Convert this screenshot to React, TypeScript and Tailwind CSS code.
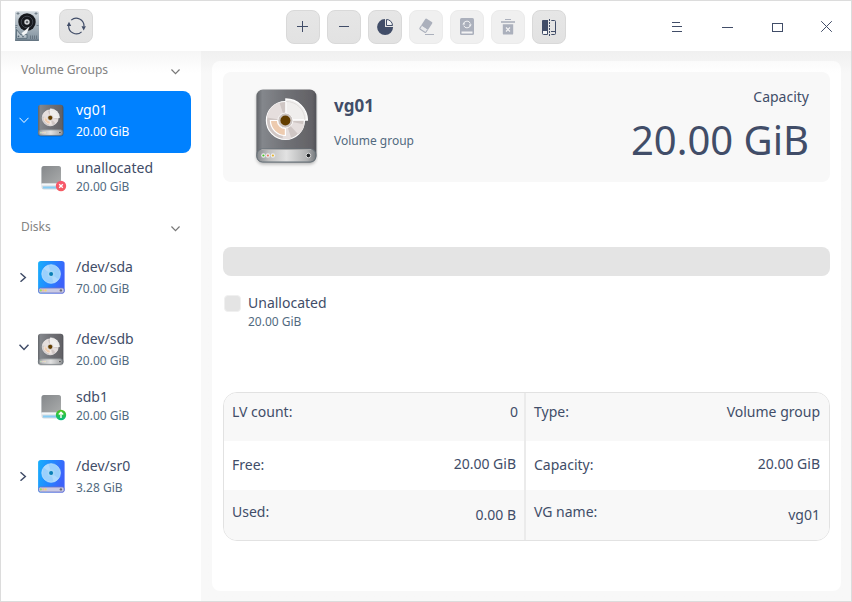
import React from "react";

function AppIcon() {
  return (
    <svg width="26" height="32" viewBox="0 0 26 32" className="shrink-0">
      <defs>
        <linearGradient id="appBody" x1="0" y1="0" x2="0" y2="1">
          <stop offset="0" stopColor="#d3dadf" />
          <stop offset="1" stopColor="#7e8f9c" />
        </linearGradient>
      </defs>
      <rect x="1" y="1.2" width="24" height="29.8" rx="1.6" fill="url(#appBody)" />
      <rect x="1" y="29.6" width="24" height="1.4" rx="0.7" fill="#667683" />
      <path d="M2.5 3.5h3M4 2v3M20.500 3.500h3M22 2v3" stroke="#6f7d88" strokeWidth="0.9" />
      <path d="M1.500 15.500h2M22.500 15.500h2M1.500 17.500h1.500" stroke="#71808c" strokeWidth="1" />
      <path d="M2.500 19.500V28.300H13v-4L7 25z" fill="#b7c2ca" stroke="#526472" strokeWidth="0.8" />
      <circle cx="13" cy="12" r="8.700" fill="#17191d" />
      <circle cx="13" cy="12" r="5.800" fill="none" stroke="#40454d" strokeWidth="1" />
      <circle cx="13" cy="12" r="2.700" fill="#d7dadc" />
      <circle cx="13" cy="12" r="1.300" fill="#65696d" />
      <path d="M15.500 16.500L7.500 23.200l1.700 2.600 3.600-2.600z" fill="#f4f6f7" />
      <circle cx="4.500" cy="26.300" r="0.900" fill="#526472" />
      <circle cx="9" cy="26.600" r="0.800" fill="#526472" />
      <path d="M16.500 25.500v3.500M18.500 25.500v3.500M20.500 25.500v3.500M22.500 25.500v3.500" stroke="#65737f" strokeWidth="0.9" />
    </svg>
  );
}

function RefreshIcon() {
  return (
    <svg width="20" height="20" viewBox="0 0 20 20" fill="none">
      <path d="M5.200 4.100A7.800 7.800 0 0 1 18 10.300" stroke="#414d68" strokeWidth="1.200" />
      <path d="M2.700 9.500A7.800 7.800 0 0 0 15.600 15.900" stroke="#414d68" strokeWidth="1.200" />
      <path d="M0.800 10L3 5.800 5.200 10zM15.500 10.300h4.400l-2.200 4.200z" fill="#414d68" />
    </svg>
  );
}

function PlusIcon() {
  return (
    <svg width="20" height="20" viewBox="0 0 20 20" shapeRendering="crispEdges">
      <path d="M4 9.500h11M9.500 4v11" stroke="#414d68" />
    </svg>
  );
}

function MinusIcon() {
  return (
    <svg width="20" height="20" viewBox="0 0 20 20" shapeRendering="crispEdges">
      <path d="M5 9.500h10" stroke="#414d68" />
    </svg>
  );
}

function PieIcon() {
  return (
    <svg width="20" height="20" viewBox="0 0 20 20">
      <path d="M10 2a8 8 0 1 0 8.100 8H10z" fill="#414d68" />
      <path d="M11.500 2.500v6h6A6 6 0 0 0 11.500 2.500z" fill="#f1f3f5" stroke="#414d68" />
      <path d="M10.500 2v7.500H18" fill="none" stroke="#e4e4e4" strokeWidth="0.600" />
    </svg>
  );
}

function EraserIcon() {
  return (
    <svg width="20" height="20" viewBox="0 0 20 20">
      <g transform="rotate(33 9.500 9)">
        <path d="M6.500 2.200h6.200a1 1 0 0 1 1 1V11H5.500V3.200a1 1 0 0 1 1-1z" fill="#abb0bc" />
        <path d="M6 11v2.800a.8.800 0 0 0 .8.800h5.600a.8.800 0 0 0 .8-.8V11" fill="#e9eaec" stroke="#abb0bc" strokeWidth="1" />
      </g>
      <path d="M9 17.500h9" stroke="#abb0bc" />
    </svg>
  );
}

function DiskSyncIcon() {
  return (
    <svg width="20" height="20" viewBox="0 0 20 20">
      <rect x="3" y="1" width="14" height="17" rx="1.500" fill="#abb0bc" />
      <path d="M4.500 15.500h11" stroke="#f3f3f4" strokeWidth="2" />
      <circle cx="10" cy="7.500" r="3.400" fill="none" stroke="#f0f1f3" strokeWidth="1" strokeDasharray="9.200 1.480" />
      <path d="M5.300 7.500l1.400-2 1.500 2zM11.800 7.500h3l-1.500 2z" fill="#f0f1f3" />
    </svg>
  );
}

function TrashIcon() {
  return (
    <svg width="20" height="20" viewBox="0 0 20 20">
      <path d="M7 2.500h6" stroke="#abb0bc" />
      <path d="M3 5h14" stroke="#abb0bc" strokeWidth="1.600" />
      <path d="M4.800 7.300h10.400V16.400a1.200 1.200 0 0 1-1.200 1.200H6a1.200 1.200 0 0 1-1.200-1.200z" fill="#abb0bc" />
      <path d="M8 10.500l4 4M12 10.500l-4 4" stroke="#f3f3f4" strokeWidth="1.200" />
    </svg>
  );
}

function SplitIcon() {
  return (
    <svg width="20" height="20" viewBox="0 0 20 20">
      <path d="M8.500 3.500H4.500a1 1 0 0 0-1 1v12a1 1 0 0 0 1 1h4z" fill="#f4f4f5" stroke="#414d68" />
      <path d="M3 4.200A1.200 1.200 0 0 1 4.200 3H9v11H3z" fill="#414d68" />
      <path d="M12.300 3.500h3.200a1 1 0 0 1 1 1v12a1 1 0 0 1-1 1h-3.200M12 14.500h4" fill="none" stroke="#414d68" />
      <path d="M10.500 2v17" stroke="#414d68" strokeDasharray="2 1" shapeRendering="crispEdges" />
    </svg>
  );
}

function ToolButton({ children, disabled = false }: { children: React.ReactNode; disabled?: boolean }) {
  return (
    <button
      className={
        disabled
          ? "flex h-[34px] w-[34px] items-center justify-center rounded-lg border border-[#ebebeb] bg-[#f0f0f0]"
          : "flex h-[34px] w-[34px] items-center justify-center rounded-lg border border-[#d9d9d9] bg-linear-to-b from-[#e6e6e6] to-[#e2e2e2]"
      }
    >
      {children}
    </button>
  );
}

function Chevron({ dir, color, size = 10, w = 1.5 }: { dir: "down" | "right"; color: string; size?: number; w?: number }) {
  return (
    <svg width={size} height={size} viewBox="0 0 10 10" fill="none" stroke={color} strokeWidth={w}>
      <path d={dir === "down" ? "M0.500 2.800L5 7.500 9.500 2.800" : "M1.500 1.300L6.300 5.500 1.500 9.700"} />
    </svg>
  );
}

function GrayDisk({ className, id }: { className: string; id: string }) {
  return (
    <svg viewBox="-0.4 0.5 64 80" className={className}>
      <defs>
        <linearGradient id={id + "b"} x1="0" x2="1" y1="0" y2="0">
          <stop offset="0" stopColor="#626569" />
          <stop offset="0.100" stopColor="#84878c" />
          <stop offset="0.500" stopColor="#707176" />
          <stop offset="0.930" stopColor="#636266" />
          <stop offset="1" stopColor="#505257" />
        </linearGradient>
        <linearGradient id={id + "t"} x1="0" x2="1" y1="0" y2="0">
          <stop offset="0" stopColor="#85898d" />
          <stop offset="0.200" stopColor="#c0c0c0" />
          <stop offset="0.500" stopColor="#e2e2e2" />
          <stop offset="0.850" stopColor="#b0b1b2" />
          <stop offset="1" stopColor="#75797d" />
        </linearGradient>
        <filter id={id + "s"} x="-20%" y="-20%" width="140%" height="140%">
          <feDropShadow dx="0" dy="2" stdDeviation="1.500" floodOpacity="0.250" />
        </filter>
      </defs>
      <rect x="2" y="2" width="60" height="73" rx="6.500" fill={`url(#${id}b)`} filter={`url(#${id}s)`} />
      <rect x="2.500" y="61.500" width="59" height="13" rx="5.500" fill={`url(#${id}t)`} stroke="#657078" />
      <path d="M7 62h50" stroke="#aaaaab" />
      <circle cx="31" cy="33" r="19" fill="#cfc6c4" stroke="#fff" strokeWidth="1.200" />
      <path d="M31 33L16 21a19 19 0 0 1 9-6zM31 33L44 47a19 19 0 0 0 6-10zM31 33l-3 18.500a19 19 0 0 0 9-.6zM31 33L12.500 30a19 19 0 0 1 3.500-9z" fill="#e5dedd" />
      <path d="M31 48a15 15 0 0 1-15-15h7a8 8 0 0 0 8 8z" fill="#edcbaf" stroke="#fff" strokeWidth="1.200" />
      <path d="M31.500 11.500A21.500 21.500 0 0 1 53 32.500H31.500z" fill="#f0eeed" stroke="#fff" strokeWidth="1.300" />
      <path d="M31.500 14A18.500 18.500 0 0 1 50.500 32.500" stroke="#dcd8d7" fill="none" strokeWidth="0.800" />
      <circle cx="31" cy="33" r="7.500" fill="#cbc3c0" stroke="#fff" strokeWidth="0.800" />
      <circle cx="31" cy="33" r="5" fill="#633e00" />
      <g fill="#eee">
        <circle cx="9" cy="68" r="2.200" />
        <circle cx="13.500" cy="68" r="2.200" />
        <circle cx="18.500" cy="68" r="2.200" />
      </g>
      <circle cx="9" cy="68" r="1.100" fill="#43c723" />
      <circle cx="13.500" cy="68" r="1.100" fill="#e37965" />
      <circle cx="18.500" cy="68" r="1.100" fill="#e7b52d" />
      <circle cx="54" cy="68" r="2.300" fill="#202326" stroke="#ddd" strokeWidth="1" />
    </svg>
  );
}

function BlueDisk({ id }: { id: string }) {
  return (
    <svg width="29" height="34" viewBox="-0.6 0 29 34">
      <defs>
        <linearGradient id={id} x1="0" x2="1" y1="0" y2="0.300">
          <stop offset="0" stopColor="#18b0fb" />
          <stop offset="0.550" stopColor="#2386ff" />
          <stop offset="1" stopColor="#3d62fa" />
        </linearGradient>
      </defs>
      <rect x="0.500" y="1" width="26.500" height="32.500" rx="2.800" fill={`url(#${id})`} />
      <rect x="1" y="28" width="25.500" height="5" rx="1.800" fill="#c9c9e3" stroke="#6b72c8" strokeWidth="0.800" />
      <circle cx="13.500" cy="14" r="9.300" fill="#9bd0fc" stroke="#badffc" strokeWidth="0.800" />
      <path d="M13.500 14L6 8.500A9.300 9.300 0 0 1 11 5.100zM13.500 14l7.500 5.500a9.300 9.300 0 0 1-5 3.400z" fill="#b0dafd" />
      <circle cx="13.500" cy="14" r="3.500" fill="#a7d8f8" />
      <circle cx="13.500" cy="14" r="2" fill="#087fb5" />
      <circle cx="3.200" cy="30.400" r="1.100" fill="#9ade5e" />
      <circle cx="5.600" cy="30.400" r="1.100" fill="#f2b69f" />
      <circle cx="8" cy="30.400" r="1.100" fill="#f4d66c" />
      <circle cx="23.300" cy="30.400" r="1.200" fill="#6c6c76" />
    </svg>
  );
}

function PartitionIcon({ id, kind }: { id: string; kind: "free" | "used" }) {
  return (
    <svg width="26" height="27" viewBox="0 0 26 27">
      <defs>
        <linearGradient id={id} x1="0" x2="1" y1="0" y2="1">
          <stop offset="0" stopColor="#85888b" />
          <stop offset="1" stopColor="#a9abab" />
        </linearGradient>
        <linearGradient id={id + "g"} x1="0" x2="0" y1="0" y2="1">
          <stop offset="0" stopColor={kind === "free" ? "#f8586f" : "#4fc516"} />
          <stop offset="1" stopColor={kind === "free" ? "#f45b62" : "#06bd83"} />
        </linearGradient>
      </defs>
      <rect x="0.500" y="1" width="19.500" height="23.500" rx="2.500" fill="#d4dbe1" />
      <path d="M0.500 18.500V3.500A2.500 2.500 0 0 1 3 1h14.500A2.500 2.500 0 0 1 20 3.500v15z" fill={`url(#${id})`} />
      <path d="M1 19.500h18.500" stroke="#f5f7f8" strokeWidth="2" />
      <path d="M2 22.500h15" stroke="#86cdf5" strokeWidth="2" />
      <circle cx="20" cy="21" r="5.200" fill={`url(#${id}g)`} />
      {kind === "free" ? (
        <path d="M18.200 19.200l3.600 3.600M21.800 19.200l-3.600 3.600" stroke="#fff" strokeWidth="1.300" />
      ) : (
        <path d="M20 24v-5.500M17.800 20.500L20 18.300l2.200 2.200" stroke="#fff" fill="none" strokeWidth="1.400" />
      )}
    </svg>
  );
}

function GroupHeader({ label, className }: { label: string; className: string }) {
  return (
    <div className={"flex items-start justify-between pl-[20px] pr-[21px] " + className}>
      <span className="text-[12px] leading-[20px] text-[#838383]">{label}</span>
      <span className="mt-[7px]">
        <Chevron dir="down" color="#777" size={9} w={1.300} />
      </span>
    </div>
  );
}

function DiskRow({ name, size, open, selected = false, icon, className = "" }: {
  name: string; size: string; open: boolean; selected?: boolean; icon: React.ReactNode; className?: string;
}) {
  return (
    <div className={"mx-[10px] flex h-[62px] rounded-lg " + (selected ? "bg-[#0081ff] text-white " : "text-[#414d68] ") + className}>
      <div className={"flex w-[26px] justify-center " + (open && !selected ? "pt-[22px]" : "pt-[24px]")}>
        <Chevron dir={open ? "down" : "right"} color={selected ? "#fff" : "#414d68"} w={selected ? 1 : 1.500} />
      </div>
      <div className="w-[39px] pt-[12px]">{icon}</div>
      <div className="pt-[9px]">
        <div className="text-[14px] leading-[20px]">{name}</div>
        <div className={"mt-[2px] text-[12px] leading-[20px] " + (selected ? "text-white" : "text-[#526a7f]")}>{size}</div>
      </div>
    </div>
  );
}

function PartitionRow({ name, size, icon }: { name: string; size: string; icon: React.ReactNode }) {
  return (
    <div className="flex h-[58px] pl-[40px] pt-[5px]">
      <div className="w-[35px] pt-[7px]">{icon}</div>
      <div>
        <div className="text-[14px] leading-[20px] text-[#414d68]">{name}</div>
        <div className="-mt-px text-[12px] leading-[20px] text-[#526a7f]">{size}</div>
      </div>
    </div>
  );
}

function Cell({ label, value, className, labelClass, valueClass }: {
  label: string; value: string; className: string; labelClass: string; valueClass: string;
}) {
  return (
    <div className={"flex items-start justify-between pl-2 text-[14px] leading-[20px] text-[#414d68] " + className}>
      <span className={labelClass}>{label}</span>
      <span className={valueClass}>{value}</span>
    </div>
  );
}

export default function App() {
  return (
    <div className="flex h-[602px] w-[852px] flex-col overflow-hidden border border-[#dcdcdc] bg-white font-['Noto_Sans',sans-serif]">
      <header className="flex h-[50px] shrink-0 items-start bg-white">
        <div className="pl-[13px] pt-[9px]"><AppIcon /></div>
        <div className="ml-[19px] pt-[8px]"><ToolButton><RefreshIcon /></ToolButton></div>
        <div className="ml-[193px] flex gap-[7px] pt-[9px]">
          <ToolButton><PlusIcon /></ToolButton>
          <ToolButton><MinusIcon /></ToolButton>
          <ToolButton><PieIcon /></ToolButton>
          <ToolButton disabled><EraserIcon /></ToolButton>
          <ToolButton disabled><DiskSyncIcon /></ToolButton>
          <ToolButton disabled><TrashIcon /></ToolButton>
          <ToolButton><SplitIcon /></ToolButton>
        </div>
        <div className="ml-[105px] flex gap-[38px] pt-[20px]">
          <svg width="12" height="12" viewBox="0 0 12 12" stroke="#414d68" shapeRendering="crispEdges">
            <path d="M1 1.500h8M1 5.500h10M1 10.500h10" />
          </svg>
          <svg width="12" height="12" viewBox="0 0 12 12" stroke="#414d68" shapeRendering="crispEdges">
            <path d="M1 6.500h11" />
          </svg>
          <svg width="12" height="12" viewBox="0 0 12 12" fill="none" stroke="#414d68" shapeRendering="crispEdges">
            <rect x="1.500" y="2.500" width="10" height="8" />
          </svg>
          <svg width="12" height="12" viewBox="0 0 12 12" stroke="#414d68">
            <path d="M0.200 0.200l10.600 10.600M10.800 0.200l-10.600 10.600" />
          </svg>
        </div>
      </header>

      <div className="flex min-h-0 flex-1">
        <aside className="w-[200px] shrink-0 bg-linear-to-b from-[#f6f6f6] to-white to-[22px]">
          <GroupHeader label="Volume Groups" className="h-[40px] pt-[9px]" />
          <DiskRow name="vg01" size="20.00 GiB" open selected icon={<GrayDisk id="vg" className="mt-px h-[34px] w-[27px]" />} />
          <PartitionRow name="unallocated" size="20.00 GiB" icon={<PartitionIcon id="pf" kind="free" />} />
          <GroupHeader label="Disks" className="h-[37px] pt-[6px]" />
          <DiskRow name="/dev/sda" size="70.00 GiB" open={false} icon={<BlueDisk id="sda" />} />
          <DiskRow name="/dev/sdb" size="20.00 GiB" open icon={<GrayDisk id="sdb" className="mt-px h-[34px] w-[27px]" />} className="mt-[10px]" />
          <PartitionRow name="sdb1" size="20.00 GiB" icon={<PartitionIcon id="pu" kind="used" />} />
          <DiskRow name="/dev/sr0" size="3.28 GiB" open={false} icon={<BlueDisk id="sr0" />} className="mt-[7px]" />
        </aside>

        <main className="min-w-0 flex-1 bg-linear-to-b from-[#f0f0f0] to-[#f8f8f8] to-[22px] pb-[10px] pl-[11px] pr-[10px] pt-[10px]">
          <div className="flex h-[530px] flex-col rounded-lg bg-linear-to-b from-[#fbfbfb] to-white to-[12px] px-[11px] pt-[11px]">
            <section className="flex h-[110px] shrink-0 rounded-lg bg-[#f8f8f8] pl-[31px] pr-[21px]">
              <GrayDisk id="big" className="mt-[16px] h-[80px] w-[64px]" />
              <div className="ml-4 pt-[23px]">
                <div className="text-[17px] font-bold leading-[22px] text-[#414d68]">vg01</div>
                <div className="mt-[14px] text-[12px] leading-[20px] text-[#526a7f]">Volume group</div>
              </div>
              <div className="ml-auto pt-[15px] text-right text-[#414d68]">
                <div className="text-[14px] leading-[20px]">Capacity</div>
                <div className="mt-[8px] text-[40px] leading-[50px]">20.00 GiB</div>
              </div>
            </section>

            <div className="mt-[65px] h-[29px] shrink-0 rounded-lg bg-[#e4e4e4]" />

            <div className="mt-[17px] flex pl-px">
              <div className="mt-[2px] h-[17px] w-[17px] rounded-[4px] border border-[#f0f0f0] bg-[#e4e4e4]" />
              <div className="ml-[7px]">
                <div className="text-[14px] leading-[20px] text-[#414d68]">Unallocated</div>
                <div className="-mt-px text-[12px] leading-[20px] text-[#526a7f]">20.00 GiB</div>
              </div>
            </div>

            <section className="mt-[60px] grid h-[149px] shrink-0 grid-cols-[302px_1fr] overflow-hidden rounded-[14px] border border-[#e2e2e2]">
              <div className="border-r-2 border-[#ebebeb]">
                <Cell label="LV count:" value="0" className="h-[48px] bg-[#f8f8f8] pr-[6px] pt-[9px]" labelClass="" valueClass="" />
                <Cell label="Free:" value="20.00 GiB" className="h-[49px] bg-white pr-[8px] pt-[13px]" labelClass="pt-px" valueClass="" />
                <Cell label="Used:" value="0.00 B" className="h-[50px] bg-[#f8f8f8] pr-[8px] pt-[12px]" labelClass="" valueClass="pt-[3px]" />
              </div>
              <div>
                <Cell label="Type:" value="Volume group" className="h-[48px] bg-[#f8f8f8] pr-[9px] pt-[9px]" labelClass="" valueClass="" />
                <Cell label="Capacity:" value="20.00 GiB" className="h-[49px] bg-white pr-[9px] pt-[13px]" labelClass="pt-px" valueClass="" />
                <Cell label="VG name:" value="vg01" className="h-[50px] bg-[#f8f8f8] pr-[9px] pt-[12px]" labelClass="" valueClass="pt-[3px]" />
              </div>
            </section>
          </div>
        </main>
      </div>
    </div>
  );
}
